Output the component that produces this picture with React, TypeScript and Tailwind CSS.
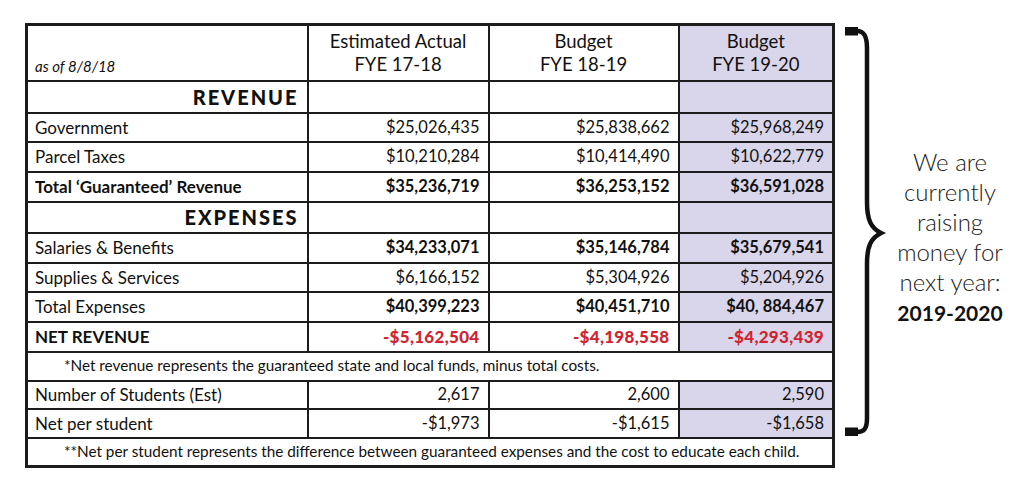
import React from "react";

type Row =
  | { kind: "section"; label: string; h: string }
  | { kind: "note"; text: string; h: string }
  | {
      kind: "data";
      label: string;
      vals: string[];
      h: string;
      labelCls: string;
      valCls: string;
    };

const rows: Row[] = [
  { kind: "section", label: "REVENUE", h: "h-[32px]" },
  {
    kind: "data",
    label: "Government",
    vals: ["$25,026,435", "$25,838,662", "$25,968,249"],
    h: "h-[29px]",
    labelCls: "font-normal",
    valCls: "font-normal",
  },
  {
    kind: "data",
    label: "Parcel Taxes",
    vals: ["$10,210,284", "$10,414,490", "$10,622,779"],
    h: "h-[30px]",
    labelCls: "font-normal",
    valCls: "font-normal",
  },
  {
    kind: "data",
    label: "Total \u2018Guaranteed\u2019 Revenue",
    vals: ["$35,236,719", "$36,253,152", "$36,591,028"],
    h: "h-[30px]",
    labelCls: "font-bold",
    valCls: "font-bold",
  },
  { kind: "section", label: "EXPENSES", h: "h-[31px]" },
  {
    kind: "data",
    label: "Salaries & Benefits",
    vals: ["$34,233,071", "$35,146,784", "$35,679,541"],
    h: "h-[30px]",
    labelCls: "font-normal",
    valCls: "font-bold",
  },
  {
    kind: "data",
    label: "Supplies & Services",
    vals: ["$6,166,152", "$5,304,926", "$5,204,926"],
    h: "h-[29px]",
    labelCls: "font-normal",
    valCls: "font-normal",
  },
  {
    kind: "data",
    label: "Total Expenses",
    vals: ["$40,399,223", "$40,451,710", "$40, 884,467"],
    h: "h-[30px]",
    labelCls: "font-normal",
    valCls: "font-bold",
  },
  {
    kind: "data",
    label: "NET REVENUE",
    vals: ["-$5,162,504", "-$4,198,558", "-$4,293,439"],
    h: "h-[30px]",
    labelCls: "font-bold",
    valCls: "font-black text-[17px] tracking-[0.3px] text-[#d0232f]",
  },
  {
    kind: "note",
    text: "*Net revenue represents the guaranteed state and local funds, minus total costs.",
    h: "h-[29px]",
  },
  {
    kind: "data",
    label: "Number of Students (Est)",
    vals: ["2,617", "2,600", "2,590"],
    h: "h-[28px]",
    labelCls: "font-normal",
    valCls: "font-normal",
  },
  {
    kind: "data",
    label: "Net per student",
    vals: ["-$1,973", "-$1,615", "-$1,658"],
    h: "h-[29px]",
    labelCls: "font-normal",
    valCls: "font-normal",
  },
  {
    kind: "note",
    text: "**Net per student represents the difference between guaranteed expenses and the cost to educate each child.",
    h: "h-[29px]",
  },
];

const cell = "border-2 border-[#1c1c1c] p-0";
const lav = "bg-[#d9d5ea]";

function Brace() {
  return (
    <svg width="44" height="420" viewBox="0 0 44 420" className="block">
      <path
        d="M 4 9 L 14 9 C 21 9 24 14 24 26 L 24 180 C 24 198 28 206 38 211 C 28 216 24 224 24 242 L 24 396 C 24 407 21 410 14 410 L 4 410"
        fill="none"
        stroke="#111"
        strokeWidth="4.5"
      />
      <rect x="2" y="5" width="13" height="8.5" fill="#111" />
      <rect x="2" y="405.5" width="13" height="8.5" fill="#111" />
    </svg>
  );
}

export default function App() {
  return (
    <div className="w-[1024px] h-[480px] bg-white flex items-start font-['Lato',sans-serif] text-[#111]">
      <table className="table-fixed border-collapse border-[3px] border-[#1c1c1c] w-[807px] ml-[25px] mt-[23px] text-[16.5px] leading-none">
        <colgroup>
          <col className="w-[281px]" />
          <col className="w-[181px]" />
          <col className="w-[190px]" />
          <col className="w-[155px]" />
        </colgroup>
        <tbody>
          <tr className="h-[56px]">
            <td className={`${cell} align-bottom pl-[7px] pb-[6px] italic text-[15px]`}>
              as of 8/8/18
            </td>
            <td className={`${cell} text-center text-[18.5px] leading-[23px]`}>
              Estimated Actual
              <br />
              FYE 17-18
            </td>
            <td className={`${cell} text-center text-[18.5px] leading-[23px]`}>
              Budget
              <br />
              FYE 18-19
            </td>
            <td className={`${cell} ${lav} text-center text-[18.5px] leading-[23px]`}>
              Budget
              <br />
              FYE 19-20
            </td>
          </tr>
          {rows.map((r, i) => {
            if (r.kind === "section") {
              return (
                <tr key={i} className={r.h}>
                  <td className={`${cell} text-right pr-[8px] font-black text-[20px] tracking-[2px]`}>
                    {r.label}
                  </td>
                  <td className={cell}></td>
                  <td className={cell}></td>
                  <td className={`${cell} ${lav}`}></td>
                </tr>
              );
            }
            if (r.kind === "note") {
              return (
                <tr key={i} className={r.h}>
                  <td colSpan={4} className={`${cell} pl-[36px] text-[15.3px]`}>
                    {r.text}
                  </td>
                </tr>
              );
            }
            return (
              <tr key={i} className={r.h}>
                <td className={`${cell} pl-[7px] text-[17px] ${r.labelCls}`}>{r.label}</td>
                <td className={`${cell} text-right pr-[8px] ${r.valCls}`}>{r.vals[0]}</td>
                <td className={`${cell} text-right pr-[8px] ${r.valCls}`}>{r.vals[1]}</td>
                <td className={`${cell} ${lav} text-right pr-[8px] ${r.valCls}`}>{r.vals[2]}</td>
              </tr>
            );
          })}
        </tbody>
      </table>
      <div className="ml-[8px] mt-[22px]">
        <Brace />
      </div>
      <div className="w-[126px] mt-[147px] text-center text-[24px] leading-[30px] font-light text-[#222]">
        We are
        <br />
        currently
        <br />
        raising
        <br />
        money for
        <br />
        next year:
        <br />
        <span className="font-bold text-[21px] text-[#111]">2019-2020</span>
      </div>
    </div>
  );
}
